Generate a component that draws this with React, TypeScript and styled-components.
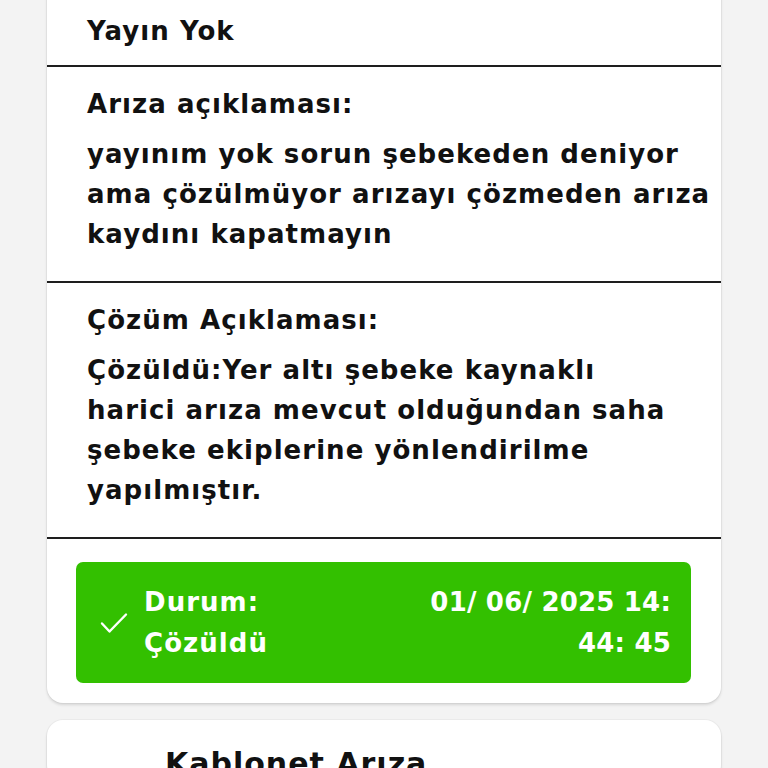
import React from "react";
import styled, {createGlobalStyle} from "styled-components";

const GlobalStyle = createGlobalStyle`
    html, body {
        margin: 0;
        padding: 0;
        background: #f3f3f3;
        overflow: hidden;
    }
    * {
        box-sizing: border-box;
    }
`;

const mainFont = `
    font-family: "DejaVu Sans", "Noto Sans", sans-serif;
    font-weight: 700;
    letter-spacing: 1.05px;
`;

const SPage = styled.div`
    width: 768px;
    height: 768px;
    padding: 0 47px;
    display: flex;
    flex-direction: column;
    gap: 17px;
`;

const SCard = styled.div`
    background: #ffffff;
    border-radius: 16px;
    box-shadow: 0 2px 3px rgba(0, 0, 0, 0.12), 0 0 0 1px rgba(0, 0, 0, 0.03);
    display: flex;
    flex-direction: column;
`;

const STopCard = styled(SCard)`
    margin-top: -20px;
`;

interface SSectionProps {
    $top: number,
    $bottom: number,
}

const SSection = styled.div<SSectionProps>`
    padding: ${(props) => `${props.$top}px 8px ${props.$bottom}px 40px`};
    border-bottom: 2px solid #1e1e1e;
    display: flex;
    flex-direction: column;
    gap: 10px;
`;

const STitle = styled.div`
    ${mainFont};
    font-size: 26px;
    line-height: 40px;
    color: #111;
`;

const SLabel = styled.div`
    ${mainFont};
    font-size: 26px;
    line-height: 40px;
    color: #111;
`;

const SText = styled.div`
    ${mainFont};
    font-size: 26px;
    line-height: 40px;
    color: #111;

    span {
        display: block;
        white-space: nowrap;
    }
`;

const SStatusWrap = styled.div`
    padding: 23px 30px 20px 29px;
`;

const SStatus = styled.div`
    background: #33c000;
    border-radius: 7px;
    padding: 20px 20px 20px 24px;
    display: flex;
    align-items: center;
    gap: 16px;
    color: #ffffff;
`;

const SCheck = styled.svg`
    width: 28px;
    height: 22px;
    flex-shrink: 0;
`;

interface SColumnProps {
    $align: "left" | "right",
}

const SColumn = styled.div<SColumnProps>`
    ${mainFont};
    font-size: 26px;
    line-height: 40.5px;
    flex: 1;
    text-align: ${(props) => props.$align};
    letter-spacing: ${(props) => props.$align === "right" ? "0.2px" : "1.05px"};

    span {
        display: block;
        white-space: nowrap;
    }
`;

const SNextCard = styled(SCard)`
    height: 120px;
    padding: 26px 20px 0 118px;
`;

const SNextTitle = styled.div`
    ${mainFont};
    font-size: 30px;
    letter-spacing: 1px;
    color: #111;
`;

const App = () => {
    return (
        <>
            <GlobalStyle/>
            <SPage>
                <STopCard>
                    <SSection $top={31} $bottom={14}>
                        <STitle>Yayın Yok</STitle>
                    </SSection>
                    <SSection $top={17} $bottom={27}>
                        <SLabel>Arıza açıklaması:</SLabel>
                        <SText>
                            <span>yayınım yok sorun şebekeden deniyor</span>
                            <span>ama çözülmüyor arızayı çözmeden arıza</span>
                            <span>kaydını kapatmayın</span>
                        </SText>
                    </SSection>
                    <SSection $top={17} $bottom={27}>
                        <SLabel>Çözüm Açıklaması:</SLabel>
                        <SText>
                            <span>Çözüldü:Yer altı şebeke kaynaklı</span>
                            <span>harici arıza mevcut olduğundan saha</span>
                            <span>şebeke ekiplerine yönlendirilme</span>
                            <span>yapılmıştır.</span>
                        </SText>
                    </SSection>
                    <SStatusWrap>
                        <SStatus>
                            <SCheck viewBox="0 0 28 22" fill="none">
                                <path d="M2 11.5 L9.5 19.5 L26 2.5" stroke="#ffffff" strokeWidth="2.4"
                                      strokeLinecap="round" strokeLinejoin="round"/>
                            </SCheck>
                            <SColumn $align="left">
                                <span>Durum:</span>
                                <span>Çözüldü</span>
                            </SColumn>
                            <SColumn $align="right">
                                <span>01/ 06/ 2025 14:</span>
                                <span>44: 45</span>
                            </SColumn>
                        </SStatus>
                    </SStatusWrap>
                </STopCard>
                <SNextCard>
                    <SNextTitle>Kablonet Arıza</SNextTitle>
                </SNextCard>
            </SPage>
        </>
    );
}

export default App
